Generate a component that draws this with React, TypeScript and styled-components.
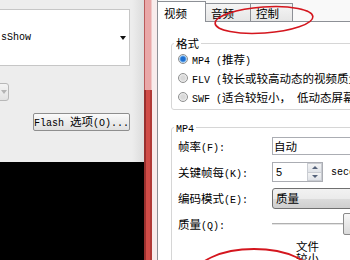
import React from 'react';
import styled, { createGlobalStyle } from 'styled-components';

const GlobalStyle = createGlobalStyle`
  html, body {
    margin: 0;
    padding: 0;
    width: 350px;
    height: 260px;
    overflow: hidden;
    background: #f0f0f0;
  }
  body {
    font-family: "Noto Sans CJK SC", "Liberation Sans", sans-serif;
    font-size: 11.5px;
    color: #000;
  }
`;

const Screen = styled.div`
  position: relative;
  display: flex;
  width: 350px;
  height: 260px;
  overflow: hidden;
`;

// latin runs in the dialog font are narrow monospace
const Lat = styled.span`
  font-family: "Liberation Mono", monospace;
  font-size: 10px;
`;

/* ---------- left pane ---------- */

const LeftPane = styled.div`
  width: 144px;
  display: flex;
  flex-direction: column;
`;

const LeftTop = styled.div`
  height: 162px;
  padding-top: 9px;
  box-sizing: border-box;
  background: linear-gradient(to right, #ededed 0, #ededed 132px, #dcdcdc 144px);
`;

const ListBox = styled.div`
  width: 131px;
  height: 57px;
  margin-left: -1px;
  box-sizing: border-box;
  border: 1px solid #c6c6c6;
  background: #fff;
  display: flex;
  align-items: center;
  justify-content: space-between;
  padding: 0 3px 0 1px;
`;

const DropArrow = styled.span<{ $faint?: boolean }>`
  width: 0;
  height: 0;
  border-left: 3.5px solid transparent;
  border-right: 3.5px solid transparent;
  border-top: 4px solid ${p => (p.$faint ? '#b4b4b4' : '#111')};
`;

const SmallCombo = styled.div`
  width: 12px;
  height: 18px;
  margin: 17px 0 0 -3px;
  box-sizing: border-box;
  border: 1px solid #b8b8b8;
  border-radius: 0 3px 3px 0;
  background: linear-gradient(#f4f4f4, #e2e2e2);
  display: flex;
  align-items: center;
  justify-content: center;
  padding-left: 2px;
`;

const OptionsButton = styled.div`
  width: 97px;
  height: 18px;
  margin: 12px 0 0 33px;
  box-sizing: border-box;
  border: 1px solid #8e8e8e;
  border-radius: 2px;
  background: linear-gradient(#fbfbfb, #ececec 50%, #e0e0e0);
  display: flex;
  align-items: center;
  justify-content: center;
  white-space: pre;
  line-height: 1;
`;

const Preview = styled.div`
  flex: 1;
  background: #000;
`;

/* ---------- splitter ---------- */

const Splitter = styled.div`
  width: 13px;
  display: flex;
  flex-direction: column;
`;

const SplitterPart = styled.div<{ $tone: 'light' | 'dark' }>`
  height: ${p => (p.$tone === 'light' ? '90px' : 'auto')};
  flex: ${p => (p.$tone === 'light' ? 'none' : '1')};
  background: ${p =>
    p.$tone === 'light'
      ? 'linear-gradient(to right, #b95a5a 0 1px, #e9a7a7 1px 7px, #f1c9c9 7px 8px, #f8ecec 8px 13px)'
      : 'linear-gradient(to right, #98302e 0 2px, #d04c47 2px 6px, #b03a37 6px 8px, #f8ecec 8px 13px)'};
`;

/* ---------- right pane ---------- */

const RightPane = styled.div`
  flex: 1;
  min-width: 0;
  background: #fff;
  border-left: 1px solid #8d9096;
  overflow: hidden;
`;

const TabStrip = styled.div`
  height: 22px;
  box-sizing: border-box;
  display: flex;
  align-items: flex-end;
  border-bottom: 1px solid #8d9096;
  background: #f9f9f9;
`;

const Tab = styled.div<{ $active?: boolean; $w: number }>`
  width: ${p => p.$w}px;
  height: ${p => (p.$active ? 21 : 18)}px;
  margin-bottom: ${p => (p.$active ? -1 : 0)}px;
  box-sizing: border-box;
  border-top: 1px solid #8d9096;
  border-right: 1px solid #8d9096;
  background: ${p => (p.$active ? '#fff' : 'linear-gradient(#f5f5f5, #e6e6e6)')};
  padding: ${p => (p.$active ? '4px 0 0 6px' : '2px 0 0 5px')};
  line-height: 15px;
`;

const TabPage = styled.div`
  padding-top: 15px;
`;

const Group = styled.fieldset<{ $mt?: number }>`
  margin: ${p => p.$mt ?? 0}px 0 0 13px;
  padding: 0 0 3px 6px;
  width: 230px;
  min-width: 0;
  border: 1px solid #d6d6d6;
  border-radius: 3px;
`;

const Legend = styled.legend`
  margin-left: -4px;
  padding: 0 2px;
  line-height: 12px;
  height: 12px;
`;

const RadioRow = styled.div`
  height: 19px;
  display: flex;
  align-items: center;
  gap: 4px;
  white-space: pre;
`;

const Radio = styled.span<{ $checked?: boolean }>`
  width: 10px;
  height: 10px;
  flex: none;
  box-sizing: border-box;
  border-radius: 50%;
  border: 1px solid #8e8f8f;
  background: ${p =>
    p.$checked
      ? 'radial-gradient(circle, #1f6fd0 0 2px, #6fb0ee 3px, #e8eef4 4px)'
      : 'radial-gradient(circle, #d9d9d9 0 2px, #eeeeee 4px)'};
`;

const FieldRow = styled.div`
  height: 26px;
  display: flex;
  align-items: center;
  white-space: nowrap;
`;

const FieldLabel = styled.span`
  width: 94px;
  flex: none;
`;

const TextBox = styled.div`
  width: 90px;
  height: 18px;
  box-sizing: border-box;
  border: 1px solid #abadb3;
  background: #fff;
  padding-left: 1px;
  line-height: 16px;
`;

const SpinBox = styled.div`
  width: 51px;
  height: 20px;
  flex: none;
  box-sizing: border-box;
  border: 1px solid #abadb3;
  background: #fff;
  display: flex;
`;

const SpinValue = styled.span`
  flex: 1;
  padding-left: 3px;
  font-family: "Liberation Sans", sans-serif;
  font-size: 11px;
  line-height: 18px;
`;

const SpinButtons = styled.div`
  width: 15px;
  display: flex;
  flex-direction: column;
`;

const SpinHalf = styled.div<{ $down?: boolean }>`
  flex: 1;
  border: 1px solid #c9ccd2;
  ${p => (p.$down ? 'border-top: none;' : '')}
  background: linear-gradient(#f4f4f4, #e0e3e8);
  display: flex;
  align-items: center;
  justify-content: center;

  &::after {
    content: '';
    border-left: 3px solid transparent;
    border-right: 3px solid transparent;
    ${p => (p.$down ? 'border-top: 3px solid #55627a;' : 'border-bottom: 3px solid #55627a;')}
  }
`;

const Unit = styled(Lat)`
  margin-left: 8px;
`;

const ComboBox = styled.div`
  width: 90px;
  height: 21px;
  box-sizing: border-box;
  border: 1px solid #707070;
  border-radius: 3px;
  background: linear-gradient(#f2f2f2, #ebebeb 50%, #dcdcdc 50%, #cfcfcf);
  padding-left: 3px;
  line-height: 19px;
`;

const Slider = styled.div`
  position: relative;
  width: 90px;
  height: 22px;
  display: flex;
  align-items: center;
`;

const Track = styled.div`
  width: 73px;
  height: 1px;
  border-top: 1px solid #b0b0b0;
  border-bottom: 1px solid #fff;
  background: #e4e4e4;
`;

const Thumb = styled.div`
  position: absolute;
  left: 71px;
  top: 0;
  width: 11px;
  height: 22px;
  box-sizing: border-box;
  border: 1px solid #8a8a8a;
  border-radius: 2px;
  background: linear-gradient(#f7f7f7, #dadada);
`;

const SizeHint = styled.div`
  padding: 3px 0 0 118px;
  line-height: 12px;
  width: 24px;
`;

const Annotations = styled.svg`
  position: absolute;
  left: 0;
  top: 0;
  pointer-events: none;
`;

export default function App() {
  return (
    <Screen>
      <GlobalStyle />
      <LeftPane>
        <LeftTop>
          <ListBox>
            <Lat>sShow</Lat>
            <DropArrow />
          </ListBox>
          <SmallCombo>
            <DropArrow $faint />
          </SmallCombo>
          <OptionsButton>
            <span><Lat>Flash </Lat>选项<Lat>(O)...</Lat></span>
          </OptionsButton>
        </LeftTop>
        <Preview />
      </LeftPane>

      <Splitter>
        <SplitterPart $tone="light" />
        <SplitterPart $tone="dark" />
      </Splitter>

      <RightPane>
        <TabStrip>
          <Tab $active $w={48}>视频</Tab>
          <Tab $w={45}>音频</Tab>
          <Tab $w={42}>控制</Tab>
        </TabStrip>
        <TabPage>
          <Group>
            <Legend>格式</Legend>
            <RadioRow>
              <Radio $checked />
              <span><Lat>MP4 (</Lat>推荐<Lat>)</Lat></span>
            </RadioRow>
            <RadioRow>
              <Radio />
              <span><Lat>FLV (</Lat>较长或较高动态的视频质量</span>
            </RadioRow>
            <RadioRow>
              <Radio />
              <span><Lat>SWF (</Lat>适合较短小，<Lat> </Lat>低动态屏幕视频</span>
            </RadioRow>
          </Group>

          <Group $mt={11}>
            <Legend><Lat>MP4</Lat></Legend>
            <FieldRow>
              <FieldLabel>帧率<Lat>(F):</Lat></FieldLabel>
              <TextBox>自动</TextBox>
            </FieldRow>
            <FieldRow>
              <FieldLabel>关键帧每<Lat>(K):</Lat></FieldLabel>
              <SpinBox>
                <SpinValue>5</SpinValue>
                <SpinButtons>
                  <SpinHalf />
                  <SpinHalf $down />
                </SpinButtons>
              </SpinBox>
              <Unit>seconds</Unit>
            </FieldRow>
            <FieldRow>
              <FieldLabel>编码模式<Lat>(E):</Lat></FieldLabel>
              <ComboBox>质量</ComboBox>
            </FieldRow>
            <FieldRow>
              <FieldLabel>质量<Lat>(Q):</Lat></FieldLabel>
              <Slider>
                <Track />
                <Thumb />
              </Slider>
            </FieldRow>
            <SizeHint>文件较小</SizeHint>
          </Group>
        </TabPage>
      </RightPane>

      <Annotations width={350} height={260} viewBox="0 0 350 260">
        <ellipse cx={264} cy={20} rx={49} ry={13} transform="rotate(-4 264 20)" fill="none" stroke="#d4161e" strokeWidth={1.6} />
        <ellipse cx={254} cy={277} rx={60} ry={28} fill="none" stroke="#d4161e" strokeWidth={1.8} />
      </Annotations>
    </Screen>
  );
}
